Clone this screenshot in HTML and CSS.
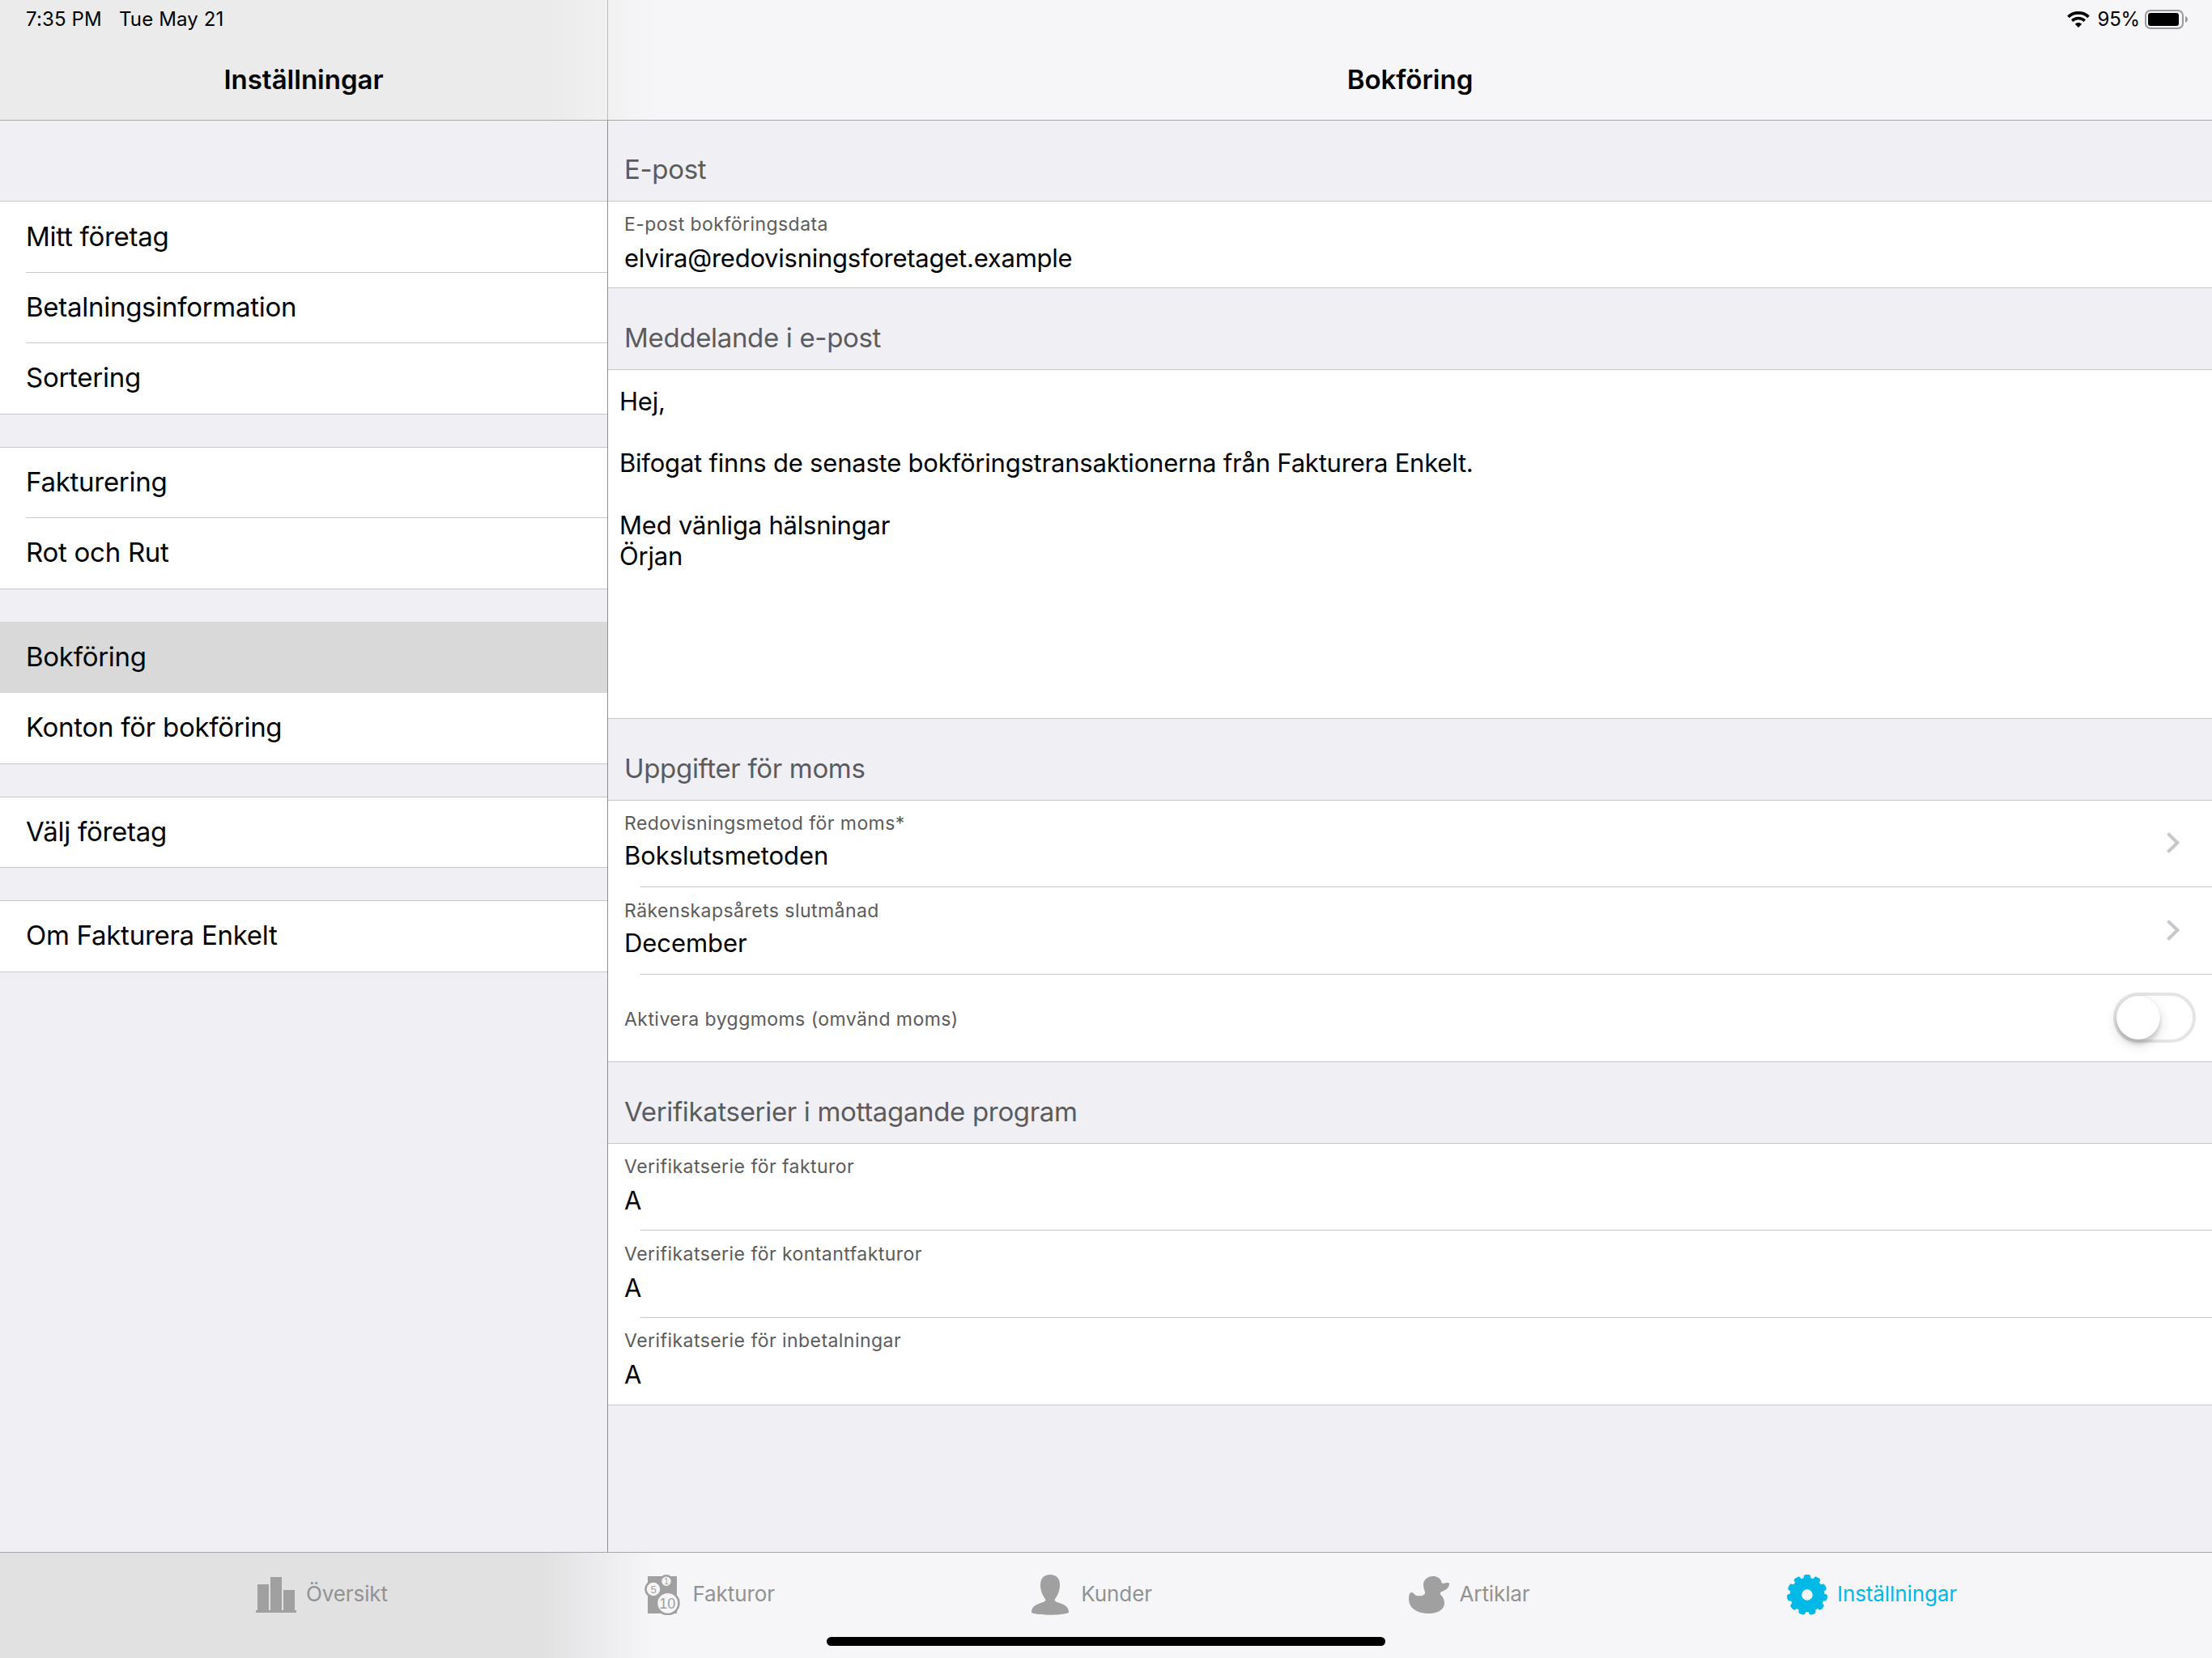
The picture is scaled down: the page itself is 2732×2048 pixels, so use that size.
FILE: index.html
```html
<!DOCTYPE html>
<html lang="sv">

<head>
    <meta charset="UTF-8">
    <meta name="viewport" content="width=device-width, initial-scale=1.0">
    <title>Inställningar - Bokföring</title>
    <link rel="stylesheet" href="styles.css">
</head>

<body>
    <header class="topbar">
        <div class="topbar-left">
            <div class="status">
                <span>7:35 PM</span>
                <span>Tue May 21</span>
            </div>
            <h1>Inställningar</h1>
        </div>
        <div class="topbar-right">
            <div class="status status-right">
                <svg class="wifi" width="28" height="20" viewBox="0 0 28 20">
                    <path d="M1.500 6.800C8.500 .2 19.500 .2 26.500 6.800" fill="none" stroke="#000" stroke-width="3.700" />
                    <path d="M6.200 11.600C10.700 7.500 17.300 7.500 21.800 11.600" fill="none" stroke="#000" stroke-width="3.500" />
                    <path d="M9.800 15.800C12.200 13.500 15.800 13.500 18.200 15.800L14 20Z" />
                </svg>
                <span class="percent">95%</span>
                <svg class="battery" width="53" height="24" viewBox="0 0 53 24">
                    <rect x="1" y="1" width="46" height="22" rx="6" fill="none" stroke="#999" stroke-width="2" />
                    <rect x="4" y="4" width="38" height="16" rx="3" />
                    <path d="M50 8C54 9.500 54 14.500 50 16Z" fill="#999" />
                </svg>
            </div>
            <h1>Bokföring</h1>
        </div>
    </header>

    <main class="content">
        <nav class="sidebar">
            <ul class="menu">
                <li><span>Mitt företag</span></li>
                <li><span>Betalningsinformation</span></li>
                <li><span>Sortering</span></li>
            </ul>
            <ul class="menu">
                <li><span>Fakturering</span></li>
                <li><span>Rot och Rut</span></li>
            </ul>
            <ul class="menu menu-selected">
                <li class="selected"><span>Bokföring</span></li>
                <li><span>Konton för bokföring</span></li>
            </ul>
            <ul class="menu">
                <li><span>Välj företag</span></li>
            </ul>
            <ul class="menu">
                <li><span>Om Fakturera Enkelt</span></li>
            </ul>
        </nav>

        <section class="details">
            <h2 class="first">E-post</h2>
            <div class="group group-single">
                <div class="row">
                    <div class="field">
                        <label>E-post bokföringsdata</label>
                        <p>elvira@redovisningsforetaget.example</p>
                    </div>
                </div>
            </div>

            <h2>Meddelande i e-post</h2>
            <div class="message">Hej,

Bifogat finns de senaste bokföringstransaktionerna från Fakturera Enkelt.

Med vänliga hälsningar
Örjan</div>

            <h2>Uppgifter för moms</h2>
            <div class="group">
                <div class="row link">
                    <div class="field">
                        <label>Redovisningsmetod för moms*</label>
                        <p>Bokslutsmetoden</p>
                    </div>
                    <svg class="chevron" width="16" height="26" viewBox="0 0 16 26">
                        <path d="M1.500 1.500L13.300 13L1.500 24.500" />
                    </svg>
                </div>
                <div class="row link">
                    <div class="field">
                        <label>Räkenskapsårets slutmånad</label>
                        <p>December</p>
                    </div>
                    <svg class="chevron" width="16" height="26" viewBox="0 0 16 26">
                        <path d="M1.500 1.500L13.300 13L1.500 24.500" />
                    </svg>
                </div>
                <div class="row toggle">
                    <label>Aktivera byggmoms (omvänd moms)</label>
                    <div class="switch"><div class="knob"></div></div>
                </div>
            </div>

            <h2>Verifikatserier i mottagande program</h2>
            <div class="group">
                <div class="row">
                    <div class="field">
                        <label>Verifikatserie för fakturor</label>
                        <p>A</p>
                    </div>
                </div>
                <div class="row">
                    <div class="field">
                        <label>Verifikatserie för kontantfakturor</label>
                        <p>A</p>
                    </div>
                </div>
                <div class="row">
                    <div class="field">
                        <label>Verifikatserie för inbetalningar</label>
                        <p>A</p>
                    </div>
                </div>
            </div>
        </section>
    </main>

    <footer class="tabbar">
        <div class="tabs">
            <div class="tab">
                <svg width="50" height="44" viewBox="0 0 50 44">
                    <path d="M2 9H16V41H18V0H32V41H34V16H48V41H50V44H0V41H2Z" />
                </svg>
                <span>Översikt</span>
            </div>
            <div class="tab wide">
                <svg width="44" height="50" viewBox="0 0 44 50">
                    <rect x="4" y="2" width="36" height="46" />
                    <g class="coins">
                        <circle cx="27" cy="8.300" r="7" />
                        <circle cx="11" cy="18" r="9.500" />
                        <circle cx="28.700" cy="35.300" r="13.700" />
                    </g>
                    <g class="coin-text">
                        <text x="27" y="12" font-size="10">1</text>
                        <text x="11" y="22.700" font-size="13">5</text>
                        <text x="28.200" y="41.500" font-size="18">10</text>
                    </g>
                </svg>
                <span>Fakturor</span>
            </div>
            <div class="tab wide">
                <svg width="46" height="50" viewBox="0 0 46 50">
                    <path d="M23 0C31 0 35 5 35 13C35 20 32 26 28.500 31C29 34 32 34 36 35.500C43 38 46 41 46 47C36 50.700 10 50.700 0 47C0 41 3 38 10 35.500C14 34 17 34 17.500 31C14 26 11 20 11 13C11 5 15 0 23 0Z" />
                </svg>
                <span>Kunder</span>
            </div>
            <div class="tab">
                <svg width="50" height="46" viewBox="0 0 50 46">
                    <path d="M30.300 0C35 0 38.500 2.500 40 6C40.800 8.800 41.500 9.300 43.500 8.800C46 8 50 7.500 50 9.500C50 13 47 16.500 43 18C39 19.500 37.500 21 39.500 23C42 25.500 44 29 44 33C44 41 36 46 25 46C11 46 0 40 0 28C0 23 1 20 3.500 20C6 20 7 24 11 24.300C15 24.600 20 24 20 20C20 18 18 15.500 18 11C18 4 23 0 30.300 0Z" />
                </svg>
                <span>Artiklar</span>
            </div>
            <div class="tab active">
                <svg width="50" height="50" viewBox="-25 -25 50 50">
                    <circle r="14" fill="none" stroke="#00b9e6" stroke-width="14.500" />
                    <rect id="tooth" x="-4.300" y="-25" width="8.600" height="8" rx="2.800" />
                    <use href="#tooth" transform="rotate(32.73)" />
                    <use href="#tooth" transform="rotate(65.45)" />
                    <use href="#tooth" transform="rotate(98.18)" />
                    <use href="#tooth" transform="rotate(130.91)" />
                    <use href="#tooth" transform="rotate(163.64)" />
                    <use href="#tooth" transform="rotate(196.36)" />
                    <use href="#tooth" transform="rotate(229.09)" />
                    <use href="#tooth" transform="rotate(261.82)" />
                    <use href="#tooth" transform="rotate(294.55)" />
                    <use href="#tooth" transform="rotate(327.27)" />
                </svg>
                <span>Inställningar</span>
            </div>
        </div>
        <div class="home-indicator"></div>
    </footer>
</body>

</html>
```
FILE: styles.css
```css
* {
    box-sizing: border-box;
    margin: 0;
    padding: 0;
}

body {
    display: flex;
    flex-direction: column;
    width: 2732px;
    height: 2048px;
    overflow: hidden;
    background-color: #efeff4;
    font-family: Inter, 'Liberation Sans', sans-serif;
    color: #000;
}

/* top */
.topbar {
    display: flex;
    height: 149px;
    border-bottom: 1px solid #a7a7aa;
    background: linear-gradient(to right, #ebebec 0, #ebebec 680px, #f1f1f2 750px, #f6f6f8 810px);
}

.topbar-left {
    width: 751px;
    border-right: 1px solid #bcbcbe;
}

.topbar-right {
    flex: 1;
}

.status {
    display: flex;
    align-items: center;
    gap: 21px;
    height: 46px;
    padding: 1px 30px 0 32px;
    font-size: 24px;
    letter-spacing: 0.15px;
}

.status-right {
    justify-content: flex-end;
    gap: 0;
}

.percent {
    margin: 0 6px 0 10px;
    letter-spacing: -0.2px;
}

h1 {
    text-align: center;
    font-size: 33px;
    font-weight: 600;
    line-height: 40px;
    margin-top: 32px;
}

.content {
    display: flex;
    flex: 1;
}

/* left menu */
.sidebar {
    width: 751px;
    padding-top: 99px;
    border-right: 1px solid #8e8e93;
}

.menu {
    list-style: none;
    margin-bottom: 40px;
    background-color: #fff;
    border-top: 1px solid #c8c7cc;
    border-bottom: 1px solid #c8c7cc;
}

.menu li {
    height: 87.5px;
    padding-left: 32px;
    font-size: 33px;
    letter-spacing: -0.27px;
}

.menu li:last-child {
    height: 86.5px;
}

.menu span {
    display: flex;
    align-items: center;
    height: 100%;
    padding-bottom: 2.5px;
}

.menu li:not(:last-child) {
    background: linear-gradient(#c8c7cc, #c8c7cc) 32px 100% / 100% 1px no-repeat;
}

.menu-selected {
    border-top-color: #d9d9d9;
}

.menu li.selected {
    background: #d9d9d9;
}

/* right side */
.details {
    flex: 1;
}

h2 {
    display: flex;
    align-items: flex-end;
    height: 100px;
    padding: 0 0 19px 20px;
    font-size: 33px;
    font-weight: 400;
    line-height: 40px;
    letter-spacing: -0.33px;
    color: #5b5b5e;
}

h2.first {
    height: 99px;
}

.group {
    background-color: #fff;
    border-top: 1px solid #c8c7cc;
}

.row {
    display: flex;
    justify-content: space-between;
    height: 107.67px;
    padding-left: 20px;
    background: linear-gradient(#c8c7cc, #c8c7cc) 40px 100% / 100% 1px no-repeat;
}

.row:last-child {
    background-position: 0 100%;
}

.group-single .row {
    height: 107px;
}

.field {
    padding-top: 14.3px;
}

label {
    display: block;
    font-size: 23px;
    line-height: 28px;
    letter-spacing: 0.45px;
    color: #5b5b5b;
}

.row p {
    margin-top: 9px;
    font-size: 31px;
    line-height: 38px;
    letter-spacing: -0.25px;
}

.link {
    align-items: center;
    padding-right: 40px;
}

.link .field {
    align-self: flex-start;
}

.link p {
    margin-top: 7.5px;
    letter-spacing: -0.08px;
}

.chevron {
    margin-bottom: 2px;
    fill: none;
    stroke: #c7c7cc;
    stroke-width: 4px;
}

.toggle {
    align-items: center;
    padding-right: 20px;
}

.toggle label {
    padding-top: 2px;
}

.switch {
    width: 102px;
    height: 62px;
    margin-bottom: 1px;
    border: 4px solid #e5e5e5;
    border-radius: 31px;
}

.knob {
    width: 54px;
    height: 54px;
    border-radius: 50%;
    background-color: #fff;
    box-shadow: 0 6px 16px rgba(0, 0, 0, 0.15), 0 6px 4px rgba(0, 0, 0, 0.12), 0 0 1px rgba(0, 0, 0, 0.2);
}

.message {
    height: 431.67px;
    padding: 20px 14px;
    background-color: #fff;
    border-top: 1px solid #c8c7cc;
    border-bottom: 1px solid #c8c7cc;
    font-size: 31px;
    line-height: 38.2px;
    letter-spacing: -0.21px;
    white-space: pre-line;
}

/* bottom */
.tabbar {
    height: 131px;
    border-top: 1px solid #a7a7aa;
    background: linear-gradient(to right, #e1e1e2 0, #e1e1e2 670px, #ececee 742px, #f6f6f8 810px);
}

.tabs {
    display: flex;
    align-items: center;
    gap: 317.5px;
    height: 104px;
    padding-left: 316px;
}

.tab {
    display: flex;
    align-items: center;
    gap: 12px;
    font-size: 26px;
    letter-spacing: -0.1px;
    color: #929292;
}

.tab.wide {
    gap: 15px;
}

.tab svg {
    fill: #a0a0a0;
}

.tab span {
    padding-bottom: 3px;
}

.tab .coins {
    fill: #f6f6f8;
    stroke: #a0a0a0;
    stroke-width: 2.6px;
}

.coin-text {
    font-family: 'Liberation Sans', sans-serif;
    letter-spacing: 0;
    text-anchor: middle;
}

.tab.active {
    color: #00b9e6;
}

.tab.active svg {
    fill: #00b9e6;
}

.home-indicator {
    width: 690px;
    height: 11px;
    margin: 0 auto;
    border-radius: 6px;
    background-color: #000;
}
```
